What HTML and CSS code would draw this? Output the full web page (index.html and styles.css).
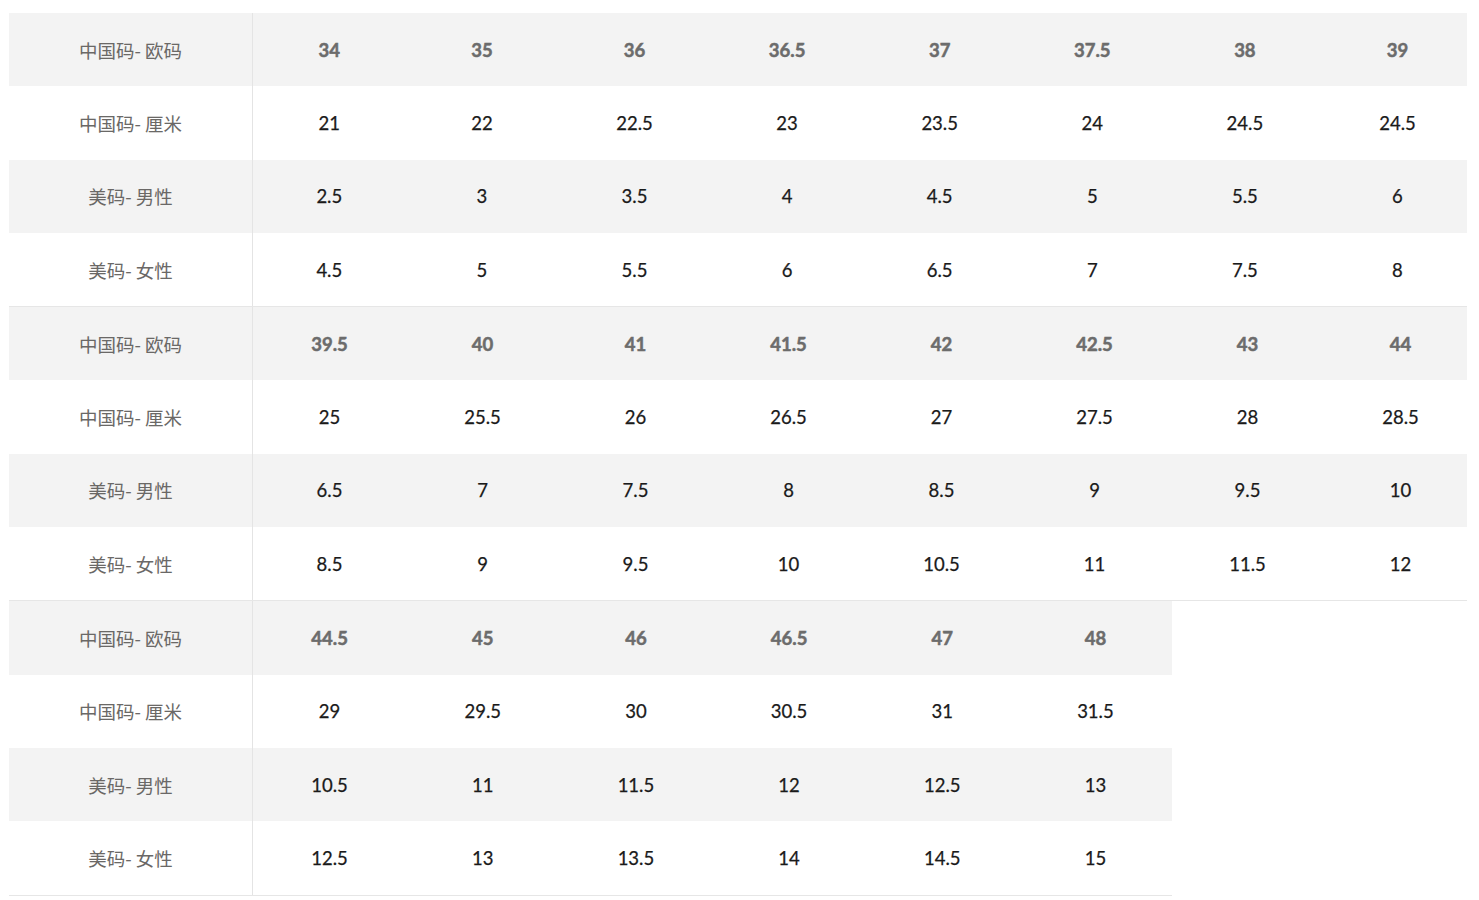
FILE: index.html
```html
<!DOCTYPE html>
<html lang="zh">
<head>
<meta charset="utf-8">
<title>尺码表</title>
<link rel="stylesheet" href="styles.css">
</head>
<body>
<div class="chart">
  <div class="block full">
    <div class="row head"><div class="lab">中国码- 欧码</div><div>34</div><div>35</div><div>36</div><div>36.5</div><div>37</div><div>37.5</div><div>38</div><div>39</div></div>
    <div class="row"><div class="lab">中国码- 厘米</div><div>21</div><div>22</div><div>22.5</div><div>23</div><div>23.5</div><div>24</div><div>24.5</div><div>24.5</div></div>
    <div class="row alt"><div class="lab">美码- 男性</div><div>2.5</div><div>3</div><div>3.5</div><div>4</div><div>4.5</div><div>5</div><div>5.5</div><div>6</div></div>
    <div class="row"><div class="lab">美码- 女性</div><div>4.5</div><div>5</div><div>5.5</div><div>6</div><div>6.5</div><div>7</div><div>7.5</div><div>8</div></div>
  </div>
  <div class="block full wide">
    <div class="row head"><div class="lab">中国码- 欧码</div><div>39.5</div><div>40</div><div>41</div><div>41.5</div><div>42</div><div>42.5</div><div>43</div><div>44</div></div>
    <div class="row"><div class="lab">中国码- 厘米</div><div>25</div><div>25.5</div><div>26</div><div>26.5</div><div>27</div><div>27.5</div><div>28</div><div>28.5</div></div>
    <div class="row alt"><div class="lab">美码- 男性</div><div>6.5</div><div>7</div><div>7.5</div><div>8</div><div>8.5</div><div>9</div><div>9.5</div><div>10</div></div>
    <div class="row"><div class="lab">美码- 女性</div><div>8.5</div><div>9</div><div>9.5</div><div>10</div><div>10.5</div><div>11</div><div>11.5</div><div>12</div></div>
  </div>
  <div class="block part">
    <div class="row head"><div class="lab">中国码- 欧码</div><div>44.5</div><div>45</div><div>46</div><div>46.5</div><div>47</div><div>48</div></div>
    <div class="row"><div class="lab">中国码- 厘米</div><div>29</div><div>29.5</div><div>30</div><div>30.5</div><div>31</div><div>31.5</div></div>
    <div class="row alt"><div class="lab">美码- 男性</div><div>10.5</div><div>11</div><div>11.5</div><div>12</div><div>12.5</div><div>13</div></div>
    <div class="row"><div class="lab">美码- 女性</div><div>12.5</div><div>13</div><div>13.5</div><div>14</div><div>14.5</div><div>15</div></div>
  </div>
</div>
</body>
</html>
```
FILE: styles.css
```css
html, body {
  margin: 0;
  padding: 0;
  background: #ffffff;
}
body {
  padding: 13px 12px 0 9px;
  font-family: Lato, "Noto Sans CJK SC", sans-serif;
  font-size: 18.5px;
  color: #1a1a1a;
}
.chart {
  display: flex;
  flex-direction: column;
  width: 1458px;
}
.block {
  display: flex;
  flex-direction: column;
  border-bottom: 1px solid #e6e6e6;
  overflow: hidden;
}
.block.part {
  width: 1163px;
}
.row {
  display: grid;
  height: 73.3px;
  align-items: center;
  text-align: center;
}
.full .row {
  grid-template-columns: 244px repeat(8, 152.6px);
}
.full.wide .row {
  grid-template-columns: 244px repeat(8, 153px);
}
.part .row {
  grid-template-columns: 244px repeat(6, 1fr);
}
.row > div {
  height: 100%;
  display: flex;
  align-items: center;
  justify-content: center;
}
.row:not(.head) > div:not(.lab) {
  -webkit-text-stroke: 0.25px #1a1a1a;
}
.row .lab {
  color: #6a6866;
  border-right: 1px solid #e4e4e4;
  font-family: "Noto Sans CJK SC", sans-serif;
  font-size: 18.5px;
}
.row.head, .row.alt {
  background: #f3f3f3;
}
.row.head > div:not(.lab) {
  font-weight: 700;
  color: #6c6c6c;
  -webkit-text-stroke: 0.5px #6c6c6c;
}
```
